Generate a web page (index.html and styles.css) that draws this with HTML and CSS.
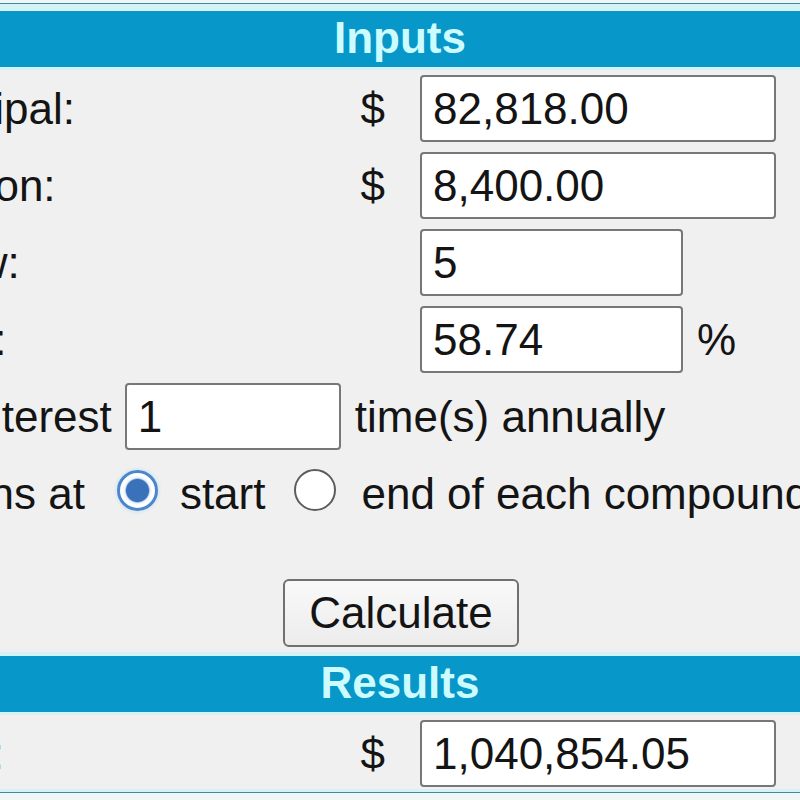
FILE: index.html
```html
<!DOCTYPE html>
<html>
<head>
<meta charset="utf-8">
<title>Compound Interest Calculator</title>
<link rel="stylesheet" href="styles.css">
</head>
<body>
<div class="viewport">
  <form class="calc">
    <div class="band band-inputs">Inputs</div>
    <div class="inputs">
      <div class="grid-row">
        <span class="label">Current principal:</span>
        <span class="cur">$</span>
        <span class="cell"><input class="field wide" type="text" value="82,818.00"></span>
      </div>
      <div class="grid-row">
        <span class="label">Annual addition:</span>
        <span class="cur">$</span>
        <span class="cell"><input class="field wide" type="text" value="8,400.00"></span>
      </div>
      <div class="grid-row">
        <span class="label">Years to grow:</span>
        <span class="cur"></span>
        <span class="cell"><input class="field mid" type="text" value="5"></span>
      </div>
      <div class="grid-row">
        <span class="label label-rate">Interest rate:</span>
        <span class="cur"></span>
        <span class="cell"><input class="field mid" type="text" value="58.74"><span class="pct">%</span></span>
      </div>
      <div class="line-row">
        <span class="txt">Compound interest</span>
        <input class="field small" type="text" value="1">
        <span class="txt after-field">time(s) annually</span>
      </div>
      <div class="line-row radio-row">
        <span class="txt">Make additions at</span>
        <input class="radio first" type="radio" name="when" checked>
        <span class="txt after-radio">start</span>
        <input class="radio second" type="radio" name="when">
        <span class="txt after-radio2">end of each compounding period</span>
      </div>
      <div class="spacer"></div>
      <div class="button-row">
        <button class="calc-btn" type="button">Calculate</button>
      </div>
    </div>
    <div class="band band-results">Results</div>
    <div class="results">
      <div class="grid-row result-row">
        <span class="label label-future">Future value:</span>
        <span class="cur">$</span>
        <span class="cell"><input class="field wide" type="text" value="1,040,854.05"></span>
      </div>
    </div>
  </form>
</div>
</body>
</html>
```

FILE: styles.css
```css
html, body {
  margin: 0;
  padding: 0;
  overflow: hidden;
  background: #eef6f6;
}

.viewport {
  width: 800px;
  height: 800px;
  overflow: hidden;
  padding-top: 3px;
  box-sizing: border-box;
}

.calc {
  margin: 0 0 0 -270px;
  width: 1340px;
  background: #d5f3f7;
  border-top: 1px solid #3f8b98;
  border-bottom: 1px solid #3f8b98;
  padding: 7px 0 3px;
  display: flex;
  flex-direction: column;
  font-family: "Liberation Sans", Arial, sans-serif;
  font-size: 44px;
  color: #141414;
}

.band {
  height: 56px;
  background: #0797c9;
  color: #ccfcff;
  font-weight: bold;
  text-align: center;
  line-height: 54px;
}

.inputs {
  margin-top: 3px;
  background: #f0f0f0;
  padding: 0 0 0 10px;
}

.results {
  margin-top: 3px;
  background: #f0f0f0;
  padding: 0 0 0 10px;
}

.band-results {
  margin-top: 4px;
}

.grid-row {
  display: grid;
  grid-template-columns: 600px 80px 1fr;
  align-items: center;
  height: 77px;
}

.result-row {
  height: 74px;
  align-items: start;
  padding-top: 5px;
  box-sizing: border-box;
}

.result-row .label,
.result-row .cur {
  align-self: center;
  margin-top: -2px;
}

.label {
  white-space: nowrap;
}

.label-rate {
  letter-spacing: 1.5px;
}

.label-future {
  letter-spacing: 0.6px;
}

.cur {
  text-align: right;
  padding-right: 35px;
}

.cell {
  display: flex;
  align-items: center;
}

.field {
  box-sizing: border-box;
  height: 67px;
  border: 2px solid #777;
  border-radius: 4px;
  background: #fff;
  padding: 0 11px;
  margin: 0;
  font-family: "Liberation Sans", Arial, sans-serif;
  font-size: 44px;
  color: #141414;
  outline: none;
}

.wide { width: 356px; }
.mid { width: 263px; }
.small { width: 216px; flex-shrink: 0; margin-left: 13px; }

.pct {
  margin-left: 14px;
}

.line-row {
  display: flex;
  align-items: center;
  height: 77px;
  white-space: nowrap;
}

.radio-row {
  height: 70px;
}

.radio-row .txt {
  padding-top: 8px;
}

.txt {
  flex-shrink: 0;
}

.after-field { margin-left: 14px; }
.after-radio { margin-left: 22px; }
.after-radio2 { margin-left: 25px; }

.radio {
  -webkit-appearance: none;
  appearance: none;
  flex-shrink: 0;
  box-sizing: border-box;
  width: 42px;
  height: 42px;
  border-radius: 50%;
  margin: 0;
  background: #fff;
  border: 2px solid #5c5c5c;
}

.radio.first {
  margin-left: 32px;
  width: 41px;
  height: 41px;
  border: 3px solid #4a87cc;
  background: radial-gradient(circle at center, #3a72ba 0, #3a72ba 11px, #e6f1fd 12.5px, #ffffff 15px);
  box-shadow: 0 0 4px #b9dcf6;
}

.radio.second {
  margin-left: 29px;
}

.spacer {
  height: 49px;
}

.button-row {
  height: 78px;
  display: flex;
  justify-content: center;
  align-items: center;
  margin-left: -10px;
}

.calc-btn {
  box-sizing: border-box;
  width: 236px;
  height: 68px;
  border: 2px solid #707070;
  border-radius: 6px;
  background: linear-gradient(#f9f9f9, #ececec);
  font-family: "Liberation Sans", Arial, sans-serif;
  font-size: 44px;
  color: #141414;
  padding: 0;
  margin-left: 2px;
}
```
